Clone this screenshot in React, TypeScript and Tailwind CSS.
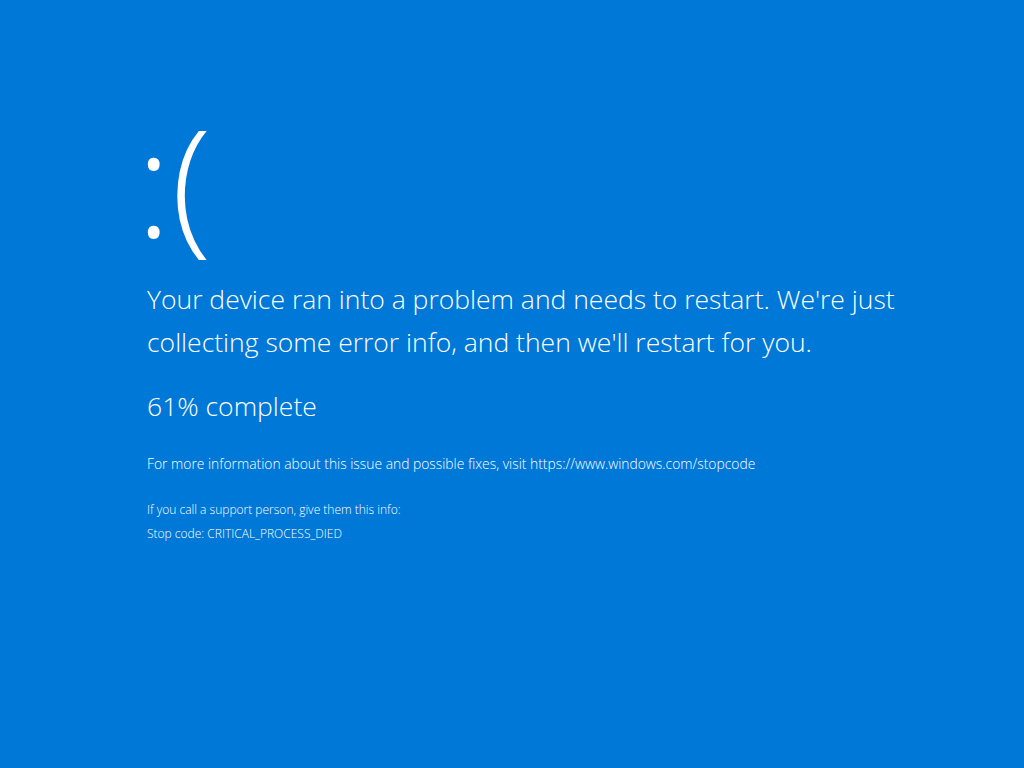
export default function App() {
  return (
    <div
      className="w-[1024px] h-[768px] bg-[#0078d7] text-white overflow-hidden"
      style={{ fontFamily: '"Open Sans", "Noto Sans", sans-serif' }}
    >
      <div className="pl-[147px] pt-[106px] flex flex-col">
        <div className="-ml-[11px] text-[148px] leading-none font-light">:(</div>
        <p className="mt-[24px] text-[26.5px] leading-[43px] font-light w-[820px]">
          Your device ran into a problem and needs to restart. We're just
          collecting some error info, and then we'll restart for you.
        </p>
        <p className="mt-[21px] text-[26.5px] leading-[43px] font-light">61% complete</p>
        <p className="mt-[26px] text-[13.85px] leading-[20px] font-light">
          For more information about this issue and possible fixes, visit
          https://www.windows.com/stopcode
        </p>
        <p className="mt-[26px] text-[12px] leading-[20px] font-light">
          If you call a support person, give them this info:
        </p>
        <p className="mt-[4px] text-[12px] leading-[20px] font-light">
          Stop code: CRITICAL_PROCESS_DIED
        </p>
      </div>
    </div>
  );
}
